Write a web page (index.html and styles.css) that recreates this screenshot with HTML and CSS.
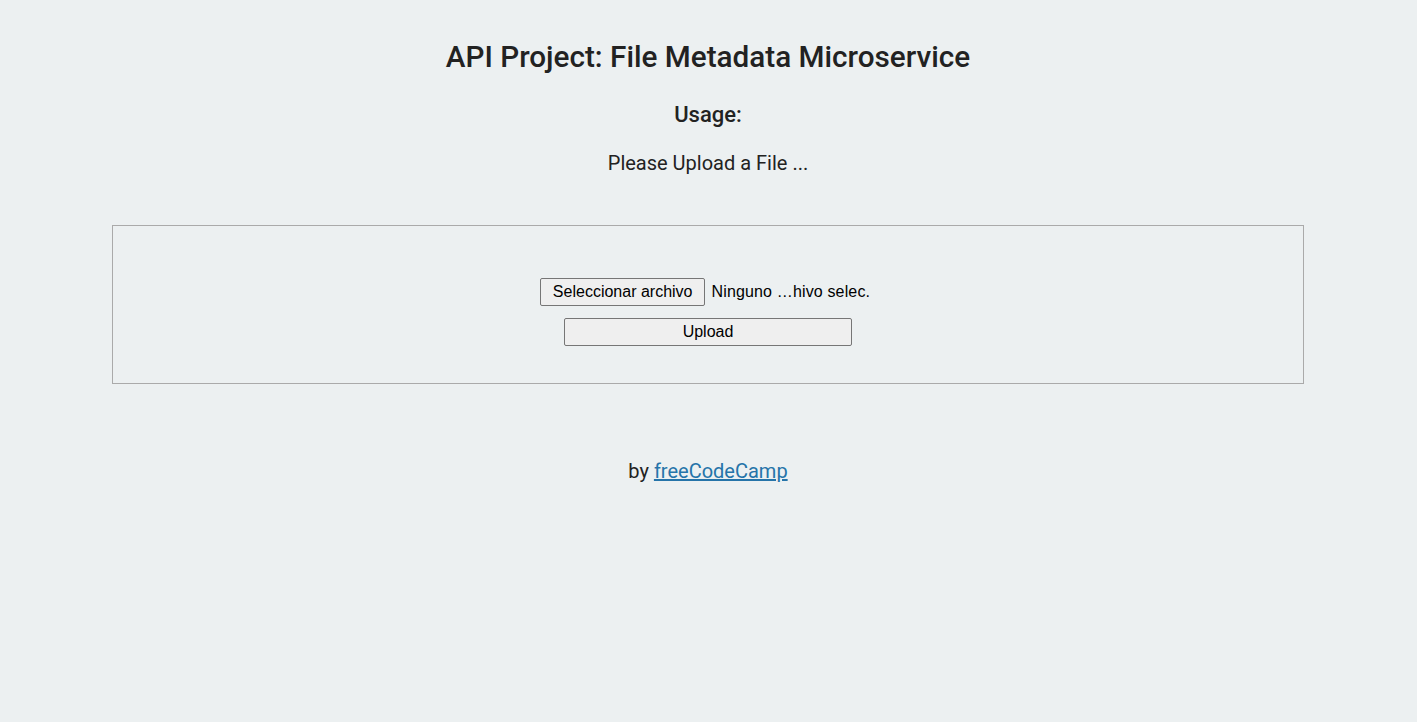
FILE: index.html
```html
<!DOCTYPE html>
<html>
<head>
<meta charset="utf-8">
<title>File Metadata Microservice</title>
<link rel="stylesheet" href="styles.css">
</head>
<body>
<div class="container">
  <h1 class="title">API Project: File Metadata Microservice</h1>
  <h3 class="subtitle">Usage:</h3>
  <p class="lead">Please Upload a File ...</p>
  <div class="view">
    <form class="upload-form">
      <div class="file-row">
        <button type="button" class="btn btn-file">Seleccionar archivo</button>
        <span class="file-name">Ninguno …hivo selec.</span>
      </div>
      <button type="button" class="btn btn-upload">Upload</button>
    </form>
  </div>
  <p class="footer">by <a href="#" class="link">freeCodeCamp</a></p>
</div>
</body>
</html>
```
FILE: styles.css
```css
html, body {
  margin: 0;
  padding: 0;
  background: #ecf0f1;
  color: #222;
  font-family: Roboto, "Noto Sans", sans-serif;
}
.container {
  display: flex;
  flex-direction: column;
  align-items: center;
  padding: 0 113px 0 112px;
}
.title {
  margin: 38px 0 0;
  font-size: 29.7px;
  font-weight: 500;
  line-height: 38px;
}
.subtitle {
  margin: 25px 0 0;
  font-size: 22px;
  font-weight: 500;
  line-height: 28px;
}
.lead {
  margin: 21px 0 0;
  font-size: 20px;
  line-height: 26px;
}
.view {
  align-self: stretch;
  box-sizing: border-box;
  margin-top: 49px;
  border: 1px solid #aaa;
  height: 159px;
  padding-top: 52px;
  display: flex;
  justify-content: center;
  align-items: flex-start;
}
.upload-form {
  display: flex;
  flex-direction: column;
  align-items: center;
  gap: 12px;
  font-family: "Liberation Sans", Arial, sans-serif;
  font-size: 16px;
  color: #000;
}
.file-row {
  display: flex;
  align-items: center;
  gap: 6px;
  margin-left: -6px;
}
.btn {
  font-family: "Liberation Sans", Arial, sans-serif;
  font-size: 16px;
  color: #000;
  background: #efefef;
  border: 1px solid #767676;
  border-radius: 2px;
  padding: 4px 9px;
  line-height: 18px;
}
.btn-file {
  padding: 4px 12px;
}
.file-name {
  letter-spacing: 0.15px;
}
.btn-upload {
  width: 288px;
}
.footer {
  margin: 74px 0 0;
  font-size: 20px;
  line-height: 26px;
}
.link {
  color: #2574a9;
}
```
